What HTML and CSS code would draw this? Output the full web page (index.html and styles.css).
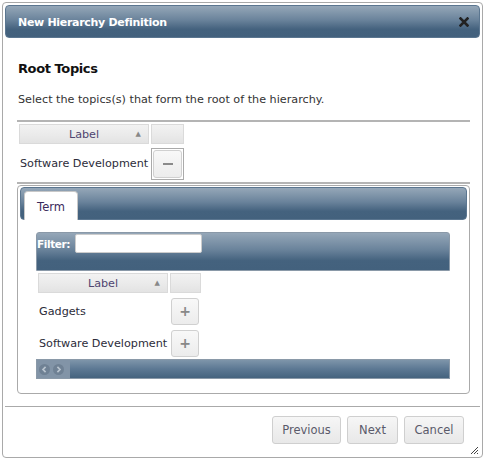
FILE: index.html
```html
<!DOCTYPE html>
<html>
<head>
<meta charset="utf-8">
<link rel="stylesheet" href="styles.css">
</head>
<body>
<div class="dialog">
  <div class="titlebar">
    <span class="title">New Hierarchy Definition</span>
    <svg class="close" width="10" height="10" viewBox="0 0 10 10"><path d="M1.5 1.5 L8.5 8.5 M8.5 1.5 L1.5 8.5" stroke="#222" stroke-width="2.6" stroke-linecap="square"/></svg>
  </div>
  <div class="body">
    <h2 class="heading">Root Topics</h2>
    <p class="desc">Select the topics(s) that form the root of the hierarchy.</p>
    <div class="rule"></div>
    <div class="grid root-grid">
      <div class="hcell label-col">Label<span class="sort">▲</span></div>
      <div class="hcell act-col"></div>
      <div class="cell text">Software Development</div>
      <div class="cell act"><span class="focus"><span class="btn sq"><span class="minus"></span></span></span></div>
    </div>
    <div class="rule rule2"></div>
    <div class="tabs">
      <div class="tabbar"><div class="tab">Term</div></div>
      <div class="panel">
        <div class="filterbar"><span class="flabel">Filter:</span><span class="finput"></span></div>
        <div class="grid term-grid">
          <div class="hcell label-col">Label<span class="sort">▲</span></div>
          <div class="hcell act-col"></div>
          <div class="cell text">Gadgets</div>
          <div class="cell act"><span class="btn sq plus">+</span></div>
          <div class="cell text">Software Development</div>
          <div class="cell act"><span class="btn sq plus">+</span></div>
        </div>
        <div class="pager">
          <span class="pgroup">
            <svg width="11" height="11" viewBox="0 0 11 11"><circle cx="5.5" cy="5.5" r="5.5" fill="#6f8194"/><path d="M6.6 2.9 L4 5.5 L6.6 8.1" stroke="#b9c4cf" stroke-width="1.7" fill="none"/></svg>
            <svg width="11" height="11" viewBox="0 0 11 11"><circle cx="5.5" cy="5.5" r="5.5" fill="#6f8194"/><path d="M4.4 2.9 L7 5.5 L4.4 8.1" stroke="#b9c4cf" stroke-width="1.7" fill="none"/></svg>
          </span>
        </div>
      </div>
    </div>
  </div>
  <div class="footer">
    <span class="fbtn prev">Previous</span>
    <span class="fbtn next">Next</span>
    <span class="fbtn cancel">Cancel</span>
  </div>
  <svg class="grip" width="9" height="9" viewBox="0 0 9 9"><path d="M8 1 L1 8 M8 4 L4 8 M8 7 L7 8" stroke="#444" stroke-width="1"/></svg>
</div>
</body>
</html>
```
FILE: styles.css
```css
* { box-sizing: border-box; }
html, body { margin: 0; padding: 0; background: #fff; }
body {
  font-family: "DejaVu Sans", Verdana, sans-serif;
  font-size: 11.2px;
  line-height: 13px;
  color: #333;
}
.dialog {
  position: relative;
  margin: 2px 0 0 2px;
  width: 481px;
  height: 456px;
  border: 1px solid #a9a9a9;
  border-radius: 4px;
  padding: 2px;
  display: flex;
  flex-direction: column;
}
.titlebar {
  flex: none;
  height: 33px;
  border: 1px solid #5b7690;
  border-radius: 4px;
  background: linear-gradient(#95a7b8, #6a839b 45%, #44627e 75%, #43617d);
  display: flex;
  align-items: center;
  justify-content: space-between;
  padding: 1px 10px 0 12px;
}
.title { color: #fff; font-weight: bold; font-size: 11px; letter-spacing: -0.3px; }
.close { display: block; }
.body { padding: 0 10px 0 12px; }
.heading {
  margin: 23px 0 0 1px;
  font-size: 13px;
  font-weight: bold;
  color: #111;
  line-height: 16px;
  letter-spacing: -0.4px;
}
.desc { margin: 16px 0 0 1px; line-height: 14px; color: #333; }
.rule { margin-top: 13px; height: 2px; background: #b4b4b4; }
.rule2 { margin-top: 1px; }
.grid { display: grid; column-gap: 2px; align-items: center; }
.root-grid { grid-template-columns: 130px 33px; margin: 2px 0 0 2px; }
.hcell {
  height: 20px;
  margin-bottom: 2px;
  border: 1px solid #dadada;
  background: linear-gradient(#f2f2f2, #ebebeb 50%, #e3e3e3);
  color: #4f4570;
  display: flex;
  align-items: center;
  justify-content: center;
  position: relative;
}
.sort {
  position: absolute;
  right: 7px;
  top: 5px;
  font-size: 7px;
  line-height: 8px;
  color: #888;
}
.cell { height: 35px; display: flex; align-items: center; }
.cell.text { color: #2c2c3a; white-space: nowrap; padding-left: 1px; }
.cell.act { justify-content: flex-start; }
.focus {
  width: 33px; height: 32px;
  border: 1px solid #aaa;
  display: flex; align-items: center; justify-content: center;
}
.btn {
  display: flex; align-items: center; justify-content: center;
  border: 1px solid #d0d0d0;
  border-radius: 3px;
  background: linear-gradient(#f8f8f8, #ececec);
  color: #888;
  font-weight: bold;
}
.focus .btn { width: 29px; height: 28px; }
.minus { width: 10px; height: 2px; background: #8a8a8a; }
.btn.plus { width: 28px; height: 27px; margin-left: 1px; font-size: 14px; }
.tabs {
  margin-top: 1px;
  height: 209px;
  border: 1px solid #aaa;
  border-radius: 4px;
  padding: 1px 2px 2px;
}
.tabbar {
  height: 33px;
  border: 1px solid #5b7690;
  border-radius: 4px;
  background: linear-gradient(#95a7b8, #6a839b 45%, #44627e 75%, #43617d);
  padding: 3px 0 0 3px;
  display: flex;
  align-items: flex-end;
}
.tab {
  width: 54px;
  height: 29px;
  margin-bottom: -1px;
  background: #fff;
  border: 1px solid #c8c8c8;
  border-bottom: none;
  border-radius: 4px 4px 0 0;
  color: #3a2a5c;
  font-size: 11.5px;
  display: flex; align-items: center; justify-content: center;
  padding-top: 2px;
}
.panel { padding: 12px 17px 0 16px; }
.filterbar {
  height: 39px;
  border: 1px solid #8a99a8;
  border-radius: 3px 3px 0 0;
  background: linear-gradient(#95a7b8, #6a839b 45%, #44627e 75%, #43617d);
  display: flex;
  align-items: flex-start;
  padding: 1px 0 0 0;
}
.flabel { color: #fff; font-weight: bold; font-size: 10.5px; letter-spacing: -0.4px; margin-top: 4px; width: 38px; }
.finput {
  width: 127px; height: 19px;
  background: #fff;
  border: 1px solid #ccc;
  border-radius: 2px;
}
.term-grid { grid-template-columns: 130px 31px; margin: 2px 0 0 2px; }
.term-grid .cell { height: 32px; }
.pager {
  height: 20px;
  border: 1px solid #8a99a8;
  background: linear-gradient(#7e95aa, #5c7893 50%, #45637e);
  display: flex;
  align-items: center;
}
.pgroup {
  width: 33px; height: 18px;
  background: #8294a7;
  display: flex; align-items: center; gap: 3px;
  padding-left: 2px;
}
.pgroup svg { display: block; }
.footer {
  margin-top: 12px;
  border-top: 1px solid #aaa;
  display: flex;
  justify-content: flex-end;
  gap: 6px;
  padding: 9px 16px 0 0;
}
.fbtn {
  height: 28px;
  border: 1px solid #cfcfcf;
  border-radius: 3px;
  background: linear-gradient(#f6f6f6, #e8e8e8);
  color: #5a5a6a;
  display: flex; align-items: center; justify-content: center;
  font-size: 11.5px;
}
.prev { width: 69px; }
.next { width: 51px; }
.cancel { width: 60px; }
.grip { position: absolute; right: 3px; bottom: 2px; }
```
